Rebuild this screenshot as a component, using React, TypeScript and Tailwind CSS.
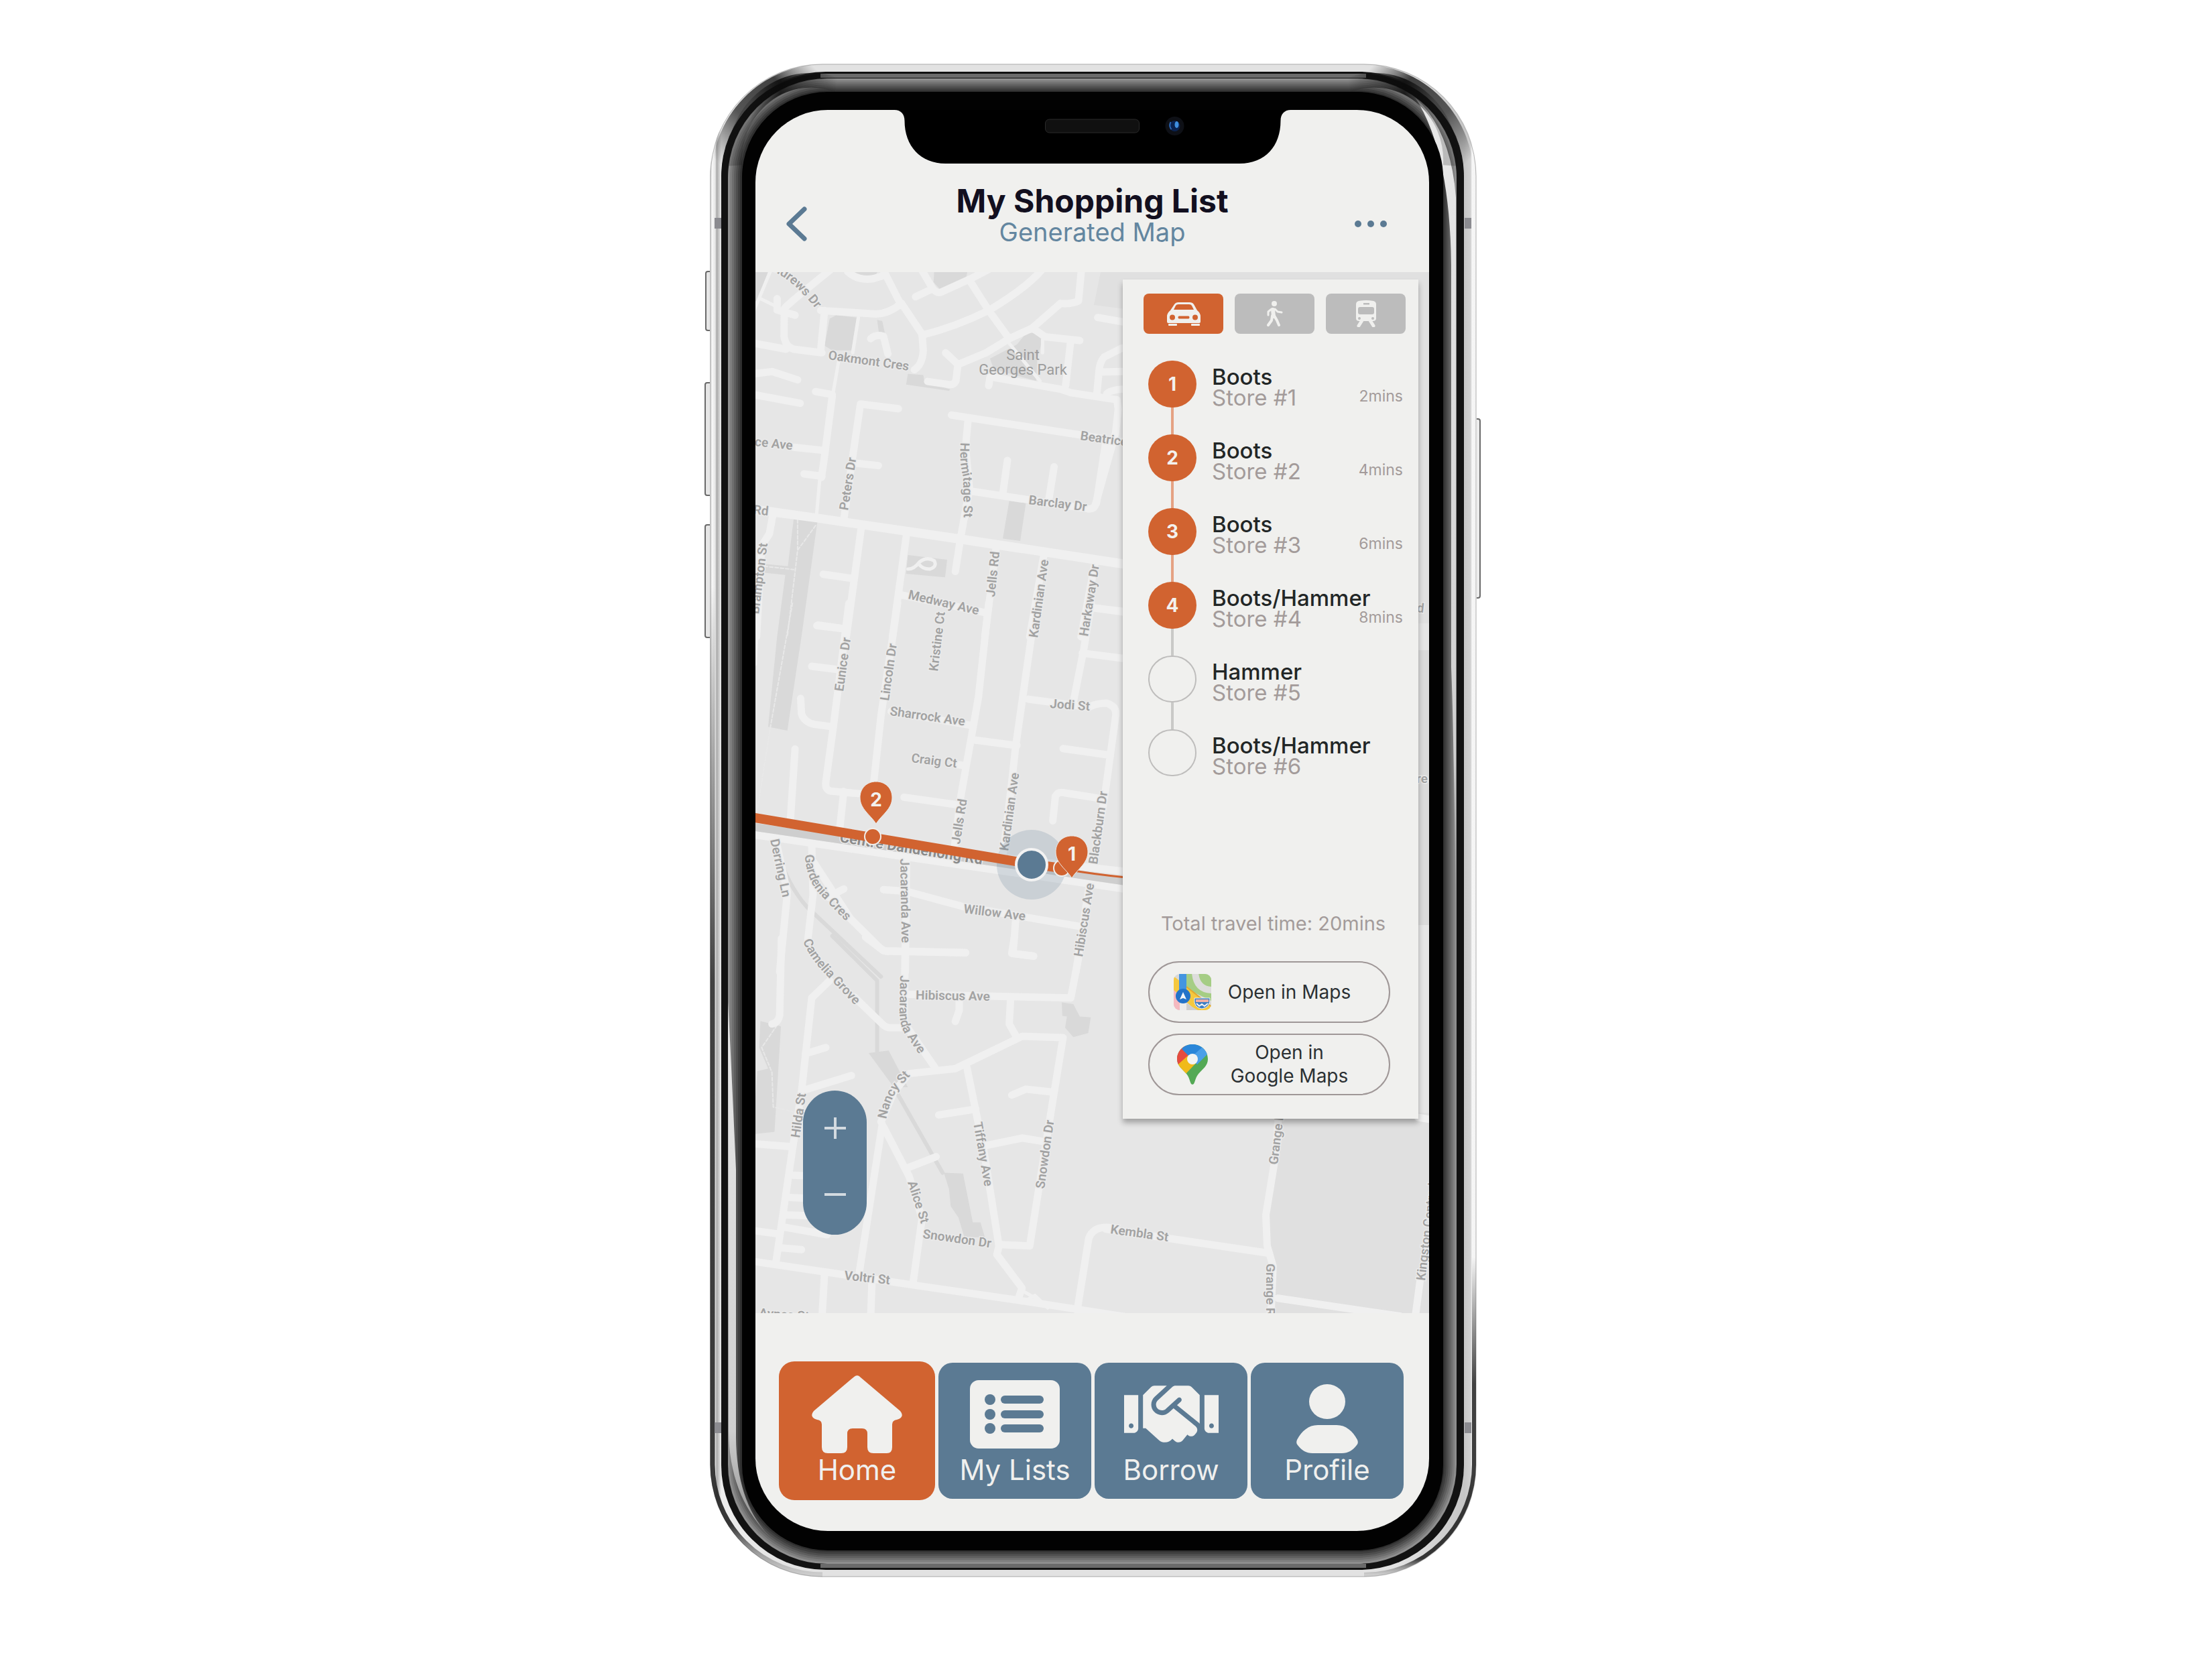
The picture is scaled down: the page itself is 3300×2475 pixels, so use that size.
import type { ReactNode } from "react";
import { FaHandshake } from "react-icons/fa";

/* ---------- map data ---------- */

type Tile = {
  transform: string;
  parks: string[];
  roads: string[];
  lanes: string[];
  trails: string[];
  creeks?: string[];
};

const tiles: Tile[] = [
  {
    transform: "translate(1100 400) scale(0.38265 0.35077)",
    parks: [
      "M360 215L385 200L465 210L445 350L370 350L340 330Z",
      "M545 220L565 225L575 275L552 275Z",
      "M665 450L725 455L730 485L830 515L825 522L658 495Z",
      "M1090 325L1120 285Q1145 270 1165 280L1190 305L1170 380L1165 480L1000 430L985 385Z",
      "M768 0L900 0L890 50L790 90L765 60Z",
      "M60 0L125 0L78 140L60 140Z",
      "M440 0L555 0L540 28Q500 38 455 22Z",
      "M220 1065L312 1080L250 1568L155 1568L187 1305L100 1295L105 1258L197 1268Z",
      "M1060 990L1125 1000L1103 1160L1035 1150Z",
      "M665 1220L818 1240L810 1315L658 1300Z",
    ],
    roads: [
      "M155 130L155 178L225 200M183 185L182 290Q188 335 220 345L330 360",
      "M60 318L190 345M185 170Q200 150 360 10",
      "M325 180L540 195Q590 195 640 150M340 180L325 350",
      "M640 160L570 10M640 150L720 280L725 350Q722 410 690 432",
      "M720 285Q850 250 980 180L910 60M980 180Q1120 90 1185 10M980 180L1060 300",
      "M430 15Q470 55 530 45L575 30",
      "M720 10L762 88Q780 110 795 102L910 45L980 5M760 88L695 122",
      "M520 300Q540 280 570 290L587 365",
      "M1342 0L1330 140Q1300 155 1260 150L1150 255L1060 300L970 360L860 410L852 480Q845 498 825 495L742 482M860 410L812 360",
      "M1150 255L1200 292L1335 308M1300 305L1280 500",
      "M1000 465L1260 515L1300 530L1480 560L1485 600L1475 700L1395 1010Q1385 1030 1360 1022L920 950M985 465L980 500",
      "M1500 340L1430 378Q1412 400 1410 440L1402 530M1415 442L1500 440M1440 535Q1450 520 1500 515",
      "M1405 210L1510 230",
      "M60 450L135 440L235 475M60 537L245 575M305 525L370 538",
      "M370 545L340 800L328 890M220 762L335 775M260 875L330 885",
      "M628 598L480 578L450 800L415 1070M450 828L550 840",
      "M835 625L1340 710L1510 740M900 640L890 760L905 940L870 1150L850 1290",
      "M1053 818L1035 960M1235 845L1215 980M1435 750L1400 1000",
      "M140 1040L125 1130L95 1180L75 1568",
      "M485 1090L425 1568M660 1130L605 1568M335 1302L450 1320M315 1518L425 1535",
      "M1010 1180L965 1568M1195 1220L1140 1568M1395 1250L1340 1568M1390 1445L1510 1460",
      "M640 1390L965 1465",
      "M50 1020L310 1060L880 1150L1510 1255",
      "M50 1028L310 1066L880 1158L1510 1263",
    ],
    lanes: [
      "M65 180L130 10M90 130L155 165",
      "M472 210L450 360",
      "M395 395L372 540",
      "M1190 305L1190 360M1060 320L1180 480",
      "M322 890L308 1060",
      "M665 1280Q690 1280 710 1250Q740 1225 768 1245Q780 1270 750 1280Q720 1280 708 1258",
    ],
    trails: ["M235 1070L235 1200L195 1568M305 1095L235 1200M105 1268L220 1282"],
  },
  {
    transform: "translate(1100 900) scale(0.38265 0.35077)",
    parks: ["M155 142L250 142L195 542L120 525Z"],
    roads: [
      "M435 0L375 520L345 760Q340 800 375 800L480 810M415 800L400 950",
      "M310 95L425 110M290 268L400 283M247 405L250 470Q260 505 300 515L370 525",
      "M625 0L560 480L530 780",
      "M225 620L207 920",
      "M980 0L940 400L870 830L845 1050M650 825L865 858M915 580L1090 605",
      "M1165 0L1085 610L1070 760L1035 1080",
      "M1380 0L1350 200L1310 420M1345 212L1510 235M1390 20L1510 38",
      "M1135 408L1370 442Q1400 425 1440 425Q1482 440 1475 480L1435 800L1390 1110",
      "M1270 618L1445 645M1230 925L1240 820Q1250 800 1275 806L1425 832",
      "M600 460L915 520M850 685L885 690",
      "M145 980L195 1230L165 1568M290 1020L295 1240L275 1430",
      "M285 1080L440 1340L555 1465Q575 1485 600 1480L890 1487M355 1250L415 1215",
      "M660 1060L655 1568M570 1218L660 1225L880 1290L1340 1375M1085 1350L1075 1490L1155 1500",
      "M1375 1180L1320 1568",
      "M50 982L1510 1215",
      "M1060 1085L1510 1140",
    ],
    lanes: ["M80 40L70 260"],
    trails: ["M215 0L130 520", "M130 520L75 900"],
    creeks: ["M150 1030Q190 1190 270 1290L560 1588"],
  },
  {
    transform: "translate(1100 1400) scale(0.38265 0.36990)",
    parks: [
      "M90 333L170 355L145 780L60 790L78 535L120 525L85 440Z",
      "M512 462L590 452L665 600L610 600Z",
      "M1265 258L1310 265L1335 315L1378 318L1368 382L1310 398L1278 360L1285 315L1267 312Z",
      "M805 945L880 948L918 1145L948 1145L965 1205L885 1205L862 1125L832 1080L825 1010Z",
    ],
    roads: [
      "M172 0L165 310Q160 340 135 345",
      "M360 170L290 240L250 620L215 850L150 1310M265 465L345 440M265 610L445 553",
      "M455 235L565 345Q580 362 600 360L650 360",
      "M655 0L650 340L770 520",
      "M500 -5L570 50L890 57M1080 -5L1070 60L1155 72",
      "M650 225L1300 240L1330 80M865 245L865 290L850 335M1065 250L1060 345L1090 400",
      "M560 740L610 620L670 545L850 525L1110 395L1270 400L1215 750L1140 1240L1020 1235",
      "M895 520L960 850L1020 1240L1012 1275L1110 1410L1095 1455",
      "M785 712L930 688M1070 632L1125 608L1230 620M970 835L1110 805L1200 820",
      "M565 750L475 1350M570 760L670 960L720 1130L685 1390M665 925L775 880",
      "M340 1350L330 1530M525 1380L520 1530",
      "M60 828L215 840M215 955L320 960M205 1045L320 1050M190 1115L320 1120M185 1165L350 1195M170 1248L250 1255M60 1178L160 1192",
      "M1325 1500L1370 1210Q1385 1165 1440 1165L1470 1168",
      "M60 1302L700 1400L1100 1460L1510 1525",
    ],
    lanes: ["M1110 1420L1210 1480M1110 1470L1160 1440L1210 1490"],
    trails: ["M155 350L95 440L135 540L140 680L220 700"],
    creeks: ["M370 -10L545 170L545 460", "M610 600L800 945"],
  },
  {
    transform: "translate(1660 1380) scale(0.35714 0.38265)",
    parks: [],
    roads: [
      "M-30 1185L655 1280M700 650L680 900L640 1130L645 1250L670 1330L660 1540",
      "M690 1455L1200 1525M1285 1380L1262 1540",
      "M1275 750L1340 760",
    ],
    lanes: [],
    trails: [],
  },
];

type LabelSpec = {
  x: number;
  y: number;
  angle: number;
  text: string;
  anchor?: "start" | "middle" | "end";
};

const labels: LabelSpec[] = [
  { x: 1235, y: 536, angle: 8, text: "Oakmont Cres" },
  { x: 1182, y: 671, angle: 6, text: "Beatrice Ave", anchor: "end" },
  { x: 1611, y: 656, angle: 8, text: "Beatrice Ave" },
  { x: 1265, y: 762, angle: -81, text: "Peters Dr" },
  { x: 1534, y: 752, angle: 7, text: "Barclay Dr" },
  { x: 1146, y: 769, angle: 6, text: "Centre Rd", anchor: "end" },
  { x: 1145, y: 811, angle: -83, text: "Brampton St", anchor: "end" },
  { x: 1354, y: 893, angle: 13, text: "Medway Ave" },
  { x: 1484, y: 891, angle: -84, text: "Jells Rd" },
  { x: 1548, y: 952, angle: -82, text: "Kardinian Ave" },
  { x: 1623, y: 950, angle: -81, text: "Harkaway Dr" },
  { x: 1399, y: 1002, angle: -83, text: "Kristine Ct" },
  { x: 1258, y: 1032, angle: -82, text: "Eunice Dr" },
  { x: 1326, y: 1046, angle: -82, text: "Lincoln Dr" },
  { x: 1327, y: 1067, angle: 8, text: "Sharrock Ave" },
  { x: 1359, y: 1137, angle: 7, text: "Craig Ct" },
  { x: 1566, y: 1056, angle: 4, text: "Jodi St" },
  { x: 1432, y: 1260, angle: -81, text: "Jells Rd" },
  { x: 1504, y: 1270, angle: -82, text: "Kardinian Ave" },
  { x: 1637, y: 1290, angle: -82, text: "Blackburn Dr" },
  { x: 1149, y: 1253, angle: 78, text: "Derring Ln" },
  { x: 1343, y: 1281, angle: 89, text: "Jacaranda Ave" },
  { x: 1437, y: 1362, angle: 7, text: "Willow Ave" },
  { x: 1615, y: 1428, angle: -81, text: "Hibiscus Ave" },
  { x: 1366, y: 1491, angle: 1, text: "Hibiscus Ave" },
  { x: 1193, y: 1698, angle: -82, text: "Hilda St" },
  { x: 1452, y: 1675, angle: 80, text: "Tiffany Ave" },
  { x: 1558, y: 1774, angle: -82, text: "Snowdon Dr" },
  { x: 1354, y: 1764, angle: 72, text: "Alice St" },
  { x: 1376, y: 1847, angle: 8, text: "Snowdon Dr" },
  { x: 1259, y: 1909, angle: 6, text: "Voltri St" },
  { x: 1132, y: 1965, angle: 4, text: "Aynes St" },
  { x: 1656, y: 1840, angle: 8, text: "Kembla St" },
  { x: 1906, y: 1738, angle: -83, text: "Grange Rd" },
  { x: 1889, y: 1885, angle: 90, text: "Grange Rd" },
  { x: 2126, y: 1911, angle: -83, text: "Kingston Centre Ln" },
  { x: 2124, y: 914, angle: 6, text: "Rd", anchor: "end" },
  { x: 2130, y: 1168, angle: 0, text: "re", anchor: "end" },
];

const curvedLabels = [
  { id: "andrews", d: "M1132 396Q1176 408 1217 461", text: "St Andrews Dr", end: true },
  { id: "hermitage", d: "M1433 660Q1431 690 1437 712L1438 790", text: "Hermitage St" },
  { id: "gardenia", d: "M1201 1275Q1202 1312 1224 1335L1275 1388", text: "Gardenia Cres" },
  { id: "camelia", d: "M1198 1404Q1208 1430 1234 1456L1290 1515", text: "Camelia Grove" },
  { id: "jacaranda", d: "M1343 1455L1342 1508Q1342 1530 1350 1542L1390 1600", text: "Jacaranda Ave" },
  { id: "nancy", d: "M1322 1670Q1328 1638 1342 1622L1368 1594", text: "Nancy St" },
];

function Pin({ x, y, label }: { x: number; y: number; label: string }) {
  return (
    <g transform={`translate(${x} ${y})`}>
      <path
        d="M0 63C-8 50 -24 41 -24 24C-24 10 -14 0 0 0C14 0 24 10 24 24C24 41 8 50 0 63Z"
        fill="#d16330"
        stroke="#ececea"
        strokeWidth="1"
      />
      <text
        x="0"
        y="37"
        textAnchor="middle"
        className="font-['Inter'] text-[28px] font-bold"
        fill="#f3f1ee"
      >
        {label}
      </text>
    </g>
  );
}

function StreetMap() {
  return (
    <svg
      className="absolute inset-0 h-full w-full"
      viewBox="1127 406 1005 1553"
      preserveAspectRatio="xMidYMid slice"
      role="img"
      aria-label="Route map"
    >
      <rect x="1127" y="406" width="1005" height="1553" fill="#e6e6e6" />
      <path d="M1642 406H2132V520L1632 455Z" fill="#e0e0e0" />
      <path d="M2110 406H2132V930H2110Z" fill="#e0e0e0" />
      <path d="M2110 970H2132V1380H2110Z" fill="#dadada" />
      <path d="M1906 1660H2132V1960H1899L1895 1866L1888 1820Z" fill="#e0e0e0" />
      {tiles.map((tile) => (
        <g key={tile.transform} transform={tile.transform} fill="none" strokeLinecap="round" strokeLinejoin="round">
          {tile.parks.map((d) => (
            <path key={d} d={d} fill="#d9d9d9" />
          ))}
          {tile.creeks?.map((d) => (
            <path key={d} d={d} stroke="#d9d9d9" strokeWidth="6" vectorEffect="non-scaling-stroke" />
          ))}
          {tile.trails.map((d) => (
            <path key={d} d={d} stroke="#e8e8e8" strokeWidth="2" strokeDasharray="5 3" vectorEffect="non-scaling-stroke" />
          ))}
          {tile.lanes.map((d) => (
            <path key={d} d={d} stroke="#f0f0f0" strokeWidth="5" vectorEffect="non-scaling-stroke" />
          ))}
          {tile.roads.map((d) => (
            <path key={d} d={d} stroke="#f0f0f0" strokeWidth="11" vectorEffect="non-scaling-stroke" />
          ))}
        </g>
      ))}

      <path d="M1120 1233L1680 1315" stroke="#cecece" strokeWidth="12" />

      <g
        className="font-['Roboto'] text-[19px] font-semibold"
        fill="#a2a2a2"
        stroke="#ebebeb"
        strokeWidth="3"
        paintOrder="stroke"
      >
        {labels.map((l) => (
          <text
            key={`${l.text}-${l.x}-${l.y}`}
            textAnchor={l.anchor ?? "start"}
            transform={`translate(${l.x} ${l.y}) rotate(${l.angle})`}
          >
            {l.text}
          </text>
        ))}
        {curvedLabels.map((l) => (
          <g key={l.id}>
            <path id={l.id} d={l.d} fill="none" stroke="none" />
            <text textAnchor={l.end ? "end" : "start"}>
              <textPath href={`#${l.id}`} startOffset={l.end ? "100%" : "0%"}>
                {l.text}
              </textPath>
            </text>
          </g>
        ))}
      </g>
      <g className="font-['Roboto'] text-[22px]" fill="#9c9c9c" textAnchor="middle">
        <text x="1526" y="537">Saint</text>
        <text x="1526" y="559">Georges Park</text>
      </g>
      <text
        transform="translate(1252 1256) rotate(9)"
        className="font-['Roboto'] text-[22px] font-bold"
        fill="#8b8b8b"
        stroke="#ebebeb"
        strokeWidth="3"
        paintOrder="stroke"
      >
        Centre Dandenong Rd
      </text>

      <circle cx="1539" cy="1290" r="52" fill="#5b7a93" fillOpacity="0.2" />
      <path d="M1120 1219L1539 1289L1590 1296" stroke="#d16330" strokeWidth="14" fill="none" />
      <path d="M1590 1297Q1630 1304 1680 1309" stroke="#d16330" strokeWidth="3" fill="none" />
      <circle cx="1302" cy="1248" r="12" fill="#d16330" stroke="#f0efec" strokeWidth="2" />
      <circle cx="1584" cy="1295" r="12" fill="#d16330" stroke="#f0efec" strokeWidth="2" />
      <circle cx="1539" cy="1290" r="23" fill="#5b7a93" stroke="#f2f2f2" strokeWidth="4" />
      <Pin x={1307} y={1166} label="2" />
      <Pin x={1599} y={1247} label="1" />
    </svg>
  );
}

/* ---------- icons ---------- */

function CarIcon() {
  return (
    <svg className="h-[35px] w-[50px]" viewBox="0 0 50 35" fill="#f0f0ee" aria-hidden="true">
      <path
        fillRule="evenodd"
        d="M5 12L11 3Q13 0 17 0H34Q38 0 40 3L45 12Q50 16 50 21V29Q50 31 48 31H2Q0 31 0 29V21Q0 16 5 12ZM10 11H40L37 5Q36 3 33 3H17Q14 3 13 5ZM8 18.5A4 4 0 1 0 8 26.5A4 4 0 1 0 8 18.5ZM42 18.5A4 4 0 1 0 42 26.5A4 4 0 1 0 42 18.5ZM18 20.5Q16.500 20.500 16.500 22.500Q16.500 24.500 18 24.500H32Q33.500 24.500 33.500 22.500Q33.500 20.500 32 20.500Z"
      />
      <rect x="2" y="32" width="13" height="3" rx="1" />
      <rect x="36" y="32" width="13" height="3" rx="1" />
    </svg>
  );
}

function WalkIcon() {
  return (
    <svg className="h-[39px] w-6" viewBox="0 0 24 39" fill="none" stroke="#f0f0ee" strokeLinecap="round" strokeLinejoin="round" aria-hidden="true">
      <circle cx="11" cy="4" r="4" fill="#f0f0ee" stroke="none" />
      <path d="M9 13L10 23" strokeWidth="6" />
      <path d="M7 12L2 16L2 21M12 12L16 16L22 17" strokeWidth="3" />
      <path d="M8 22L7 29L2 36M11 22L15 29L18 36" strokeWidth="4" />
    </svg>
  );
}

function TrainIcon() {
  return (
    <svg className="h-10 w-8" viewBox="0 0 32 40" aria-hidden="true">
      <path
        fillRule="evenodd"
        fill="#f0f0ee"
        d="M5 1Q16 -1 27 1Q31 2 31 6V27Q31 31 26 31H6Q1 31 1 27V6Q1 2 5 1ZM7 10Q4 10 4 13V18Q4 21 7 21H25Q28 21 28 18V13Q28 10 25 10ZM12 4V6.500H21V4ZM6 25A2 2 0 1 0 6 29A2 2 0 1 0 6 25ZM26 25A2 2 0 1 0 26 29A2 2 0 1 0 26 25Z"
      />
      <path d="M10 30L5 38M22 30L27 38" stroke="#f0f0ee" strokeWidth="5" strokeLinecap="round" />
    </svg>
  );
}

function AppleMapsIcon() {
  return (
    <svg className="h-[54px] w-14 shrink-0" viewBox="0 0 56 54" aria-hidden="true">
      <defs>
        <clipPath id="apple-tile">
          <rect width="56" height="54" rx="9" />
        </clipPath>
      </defs>
      <g clipPath="url(#apple-tile)">
        <rect width="56" height="54" fill="#d9d9d8" />
        <path d="M19 0H56V40L19 22Z" fill="#a5cd84" />
        <path d="M32 -2Q34 24 58 24" stroke="#dddddb" strokeWidth="10" fill="none" />
        <path d="M-2 2L19 18L58 50V60H40L19 42L-2 26Z" fill="#f5c83f" />
        <path d="M19 19L58 50" stroke="#e3a92f" strokeWidth="2" />
        <path d="M0 24L19 40V54H0Z" fill="#f4b9c0" />
        <path d="M19 44L36 54H19Z" fill="#cfcfce" />
        <rect x="9" y="36" width="10" height="18" fill="#ececec" />
        <rect x="8" y="0" width="11" height="32" fill="#4495e0" />
        <circle cx="14" cy="33" r="11" fill="#2373c9" />
        <path d="M14 27L19 38L14 36L9 38Z" fill="#f2f5f8" />
        <path d="M31 36H54Q55 50 42 52Q29 50 31 36Z" fill="#3d7fc4" stroke="#f2f2f2" strokeWidth="1" />
        <path d="M33 38H52V42H33Z" fill="#efb0a4" />
        <path d="M34 44L38 48L42 45L46 48L51 44" stroke="#f2f2f2" strokeWidth="2" fill="none" />
      </g>
    </svg>
  );
}

function GoogleMapsIcon() {
  return (
    <svg className="h-[60px] w-14 shrink-0" viewBox="-5 0 56 60" aria-hidden="true">
      <defs>
        <clipPath id="google-pin">
          <path d="M23 60C19 60 20 51 14 44C8 37 0 32 0 22C0 10 10 0 23 0C36 0 46 10 46 22C46 32 38 37 32 44C26 51 27 60 23 60Z" />
        </clipPath>
      </defs>
      <g clipPath="url(#google-pin)">
        <rect width="46" height="60" fill="#54a955" />
        <path d="M0 31L16 15L32 24L13 44L0 44Z" fill="#f0ba1a" />
        <path d="M-2 -2V33L24 10L8 -2Z" fill="#e54b40" />
        <path d="M7 7L16 -4H46V13L30 30L16 16Z" fill="#2a86d9" />
        <path d="M29 -2L48 -2V12L30 30L20 20L38 4Z" fill="#4b9fe8" />
        <circle cx="23" cy="22" r="8" fill="#f3f4f3" />
      </g>
    </svg>
  );
}

function HomeIcon() {
  return (
    <svg className="h-[116px] w-[135px]" viewBox="0 0 135 116" fill="#f0f0ee" aria-hidden="true">
      <path d="M62 3Q68 -3 73 3L132 53Q137 59 133 63Q131 65 127 66Q120 67 120 73V107Q120 116 112 116H92Q83 116 83 107V87Q83 79 75 79H61Q53 79 53 87V107Q53 116 44 116H24Q15 116 15 107V73Q15 67 8 66Q4 65 2 63Q-2 59 3 53Z" />
    </svg>
  );
}

function ListIcon() {
  return (
    <svg className="h-[102px] w-[134px]" viewBox="0 0 134 102" fill="#5b7a93" aria-hidden="true">
      <rect width="134" height="102" rx="13" fill="#f0f0ee" />
      {[29, 51, 72].map((y) => (
        <g key={y}>
          <circle cx="30" cy={y} r="8" />
          <rect x="46" y={y - 6} width="64" height="12" rx="6" />
        </g>
      ))}
    </svg>
  );
}

function ProfileIcon() {
  return (
    <svg className="h-[116px] w-[92px]" viewBox="0 0 92 116" fill="#f0f0ee" aria-hidden="true">
      <ellipse cx="46" cy="39" rx="27" ry="26" />
      <path d="M1 96C8 83 18 74 32 74H60C74 74 84 83 91 96Q93 101 90 104C84 112 77 116 68 116H24C15 116 8 112 2 104Q-1 101 1 96Z" />
    </svg>
  );
}

/* ---------- device shell ---------- */

function TopCorner() {
  return (
    <>
      <path d="M10 172A160 160 0 0 1 170 8" stroke="url(#corner-steel)" strokeWidth="14" />
      <path d="M37 152A114 120 0 0 1 190 32" stroke="url(#corner-band)" strokeWidth="22" />
    </>
  );
}

function DeviceShell() {
  return (
    <svg
      className="pointer-events-none absolute inset-0 h-full w-full overflow-visible"
      viewBox="0 0 1144 2258"
      preserveAspectRatio="none"
      aria-hidden="true"
      fill="none"
    >
      <defs>
        <linearGradient id="steel" x1="0" x2="1" y1="0" y2="0">
          <stop offset="0" stopColor="#c4c4c4" />
          <stop offset="0.003" stopColor="#f7f7f7" />
          <stop offset="0.007" stopColor="#e6e6e6" />
          <stop offset="0.009" stopColor="#a9a9a9" />
          <stop offset="0.015" stopColor="#eeeeee" />
          <stop offset="0.1" stopColor="#e2e2e2" />
          <stop offset="0.9" stopColor="#e2e2e2" />
          <stop offset="0.984" stopColor="#c6c6c6" />
          <stop offset="0.992" stopColor="#d0d0d0" />
          <stop offset="0.994" stopColor="#f7f7f7" />
          <stop offset="1" stopColor="#f2f2f2" />
        </linearGradient>
        <linearGradient id="edge-dark" x1="0" x2="0" y1="0" y2="1">
          <stop offset="0" stopColor="#222222" stopOpacity="0" />
          <stop offset="0.4" stopColor="#222222" stopOpacity="0.85" />
          <stop offset="0.95" stopColor="#222222" stopOpacity="0.9" />
          <stop offset="1" stopColor="#777777" stopOpacity="0.2" />
        </linearGradient>
        <linearGradient id="corner-steel" gradientUnits="userSpaceOnUse" x1="0" y1="150" x2="150" y2="0">
          <stop offset="0.05" stopColor="#3a3a3a" stopOpacity="0" />
          <stop offset="0.4" stopColor="#555555" />
          <stop offset="0.75" stopColor="#404040" />
          <stop offset="1" stopColor="#555555" stopOpacity="0" />
        </linearGradient>
        <linearGradient id="corner-band" gradientUnits="userSpaceOnUse" x1="60" y1="0" x2="190" y2="0">
          <stop offset="0" stopColor="#0a0a0a" stopOpacity="0.2" />
          <stop offset="0.35" stopColor="#0a0a0a" stopOpacity="0.85" />
          <stop offset="1" stopColor="#0a0a0a" stopOpacity="0" />
        </linearGradient>
        <linearGradient id="gloss" x1="0" x2="0" y1="0" y2="1">
          <stop offset="0" stopColor="#e8e8e8" />
          <stop offset="0.8" stopColor="#cfcfcf" />
          <stop offset="1" stopColor="#8a8a8a" />
        </linearGradient>
      </defs>

      {[
        { x: -6, y: 310, h: 88 },
        { x: -7, y: 476, h: 168 },
        { x: -7, y: 688, h: 168 },
      ].map((b) => (
        <rect key={b.y} x={b.x} y={b.y} width="12" height={b.h} rx="3" fill="#e6e6e6" stroke="#6a6a6a" strokeWidth="2" />
      ))}
      <rect x="1139" y="530" width="10" height="267" rx="3" fill="#ededed" stroke="#6a6a6a" strokeWidth="2" />

      <rect x="0" y="0" width="1144" height="2258" rx="168" fill="url(#steel)" />
      <rect x="1" y="1" width="1142" height="2256" rx="167" stroke="#b5b5b5" strokeWidth="1" />
      <path d="M4 780V2090A164 164 0 0 0 168 2254" stroke="url(#edge-dark)" strokeWidth="7" />
      <path d="M1140 1780V2090A164 164 0 0 1 976 2254" stroke="url(#edge-dark)" strokeWidth="6" />
      {[230, 2027].map((y) => (
        <g key={y}>
          <rect x="7" y={y} width="10" height="16" fill="#8b8b90" />
          <rect x="1126" y={y} width="10" height="16" fill="#8b8b90" />
        </g>
      ))}

      <rect x="17" y="12" width="1108" height="2235" rx="156" fill="#121212" />
      <path d="M165 18H979M165 2241H979" stroke="#6b6b6b" strokeWidth="6" />
      {["#8e8e8e", "#7e7e7e", "#6e6e6e", "#5e5e5e", "#4e4e4e", "#3e3e3e", "#2f2f2f"].map((color, i) => (
        <rect
          key={color}
          x={27 + i * 3}
          y={22 + i * 3}
          width={1087 - i * 6}
          height={2216 - i * 6}
          rx={148 - i * 3}
          fill={color}
        />
      ))}
      <path d="M27 1400Q30 1450 39 1650V2050Q40 2150 92 2200Q29 2140 28 2040Z" fill="url(#gloss)" />
      <path d="M1113 1280Q1110 1000 1106 900V300Q1104 130 1052 50Q1106 100 1113 200Z" fill="url(#gloss)" />
      <TopCorner />
      <g transform="translate(1142 0) scale(-1 1)">
        <TopCorner />
      </g>
      <rect x="48" y="42" width="1046" height="2176" rx="128" fill="#020202" />
    </svg>
  );
}

function Notch() {
  return (
    <svg className="absolute top-0 left-1/2 h-20 w-[591px] -translate-x-1/2" viewBox="207 0 591 80" aria-hidden="true">
      <path
        d="M207 -2V0C216 0 222 6 222 16C222 54 246 80 283 80H722C760 80 783 54 783 16C783 6 789 0 798 0V-2Z"
        fill="#000000"
      />
      <rect x="432" y="14" width="140" height="20" rx="6" fill="#101010" stroke="#2a2a2a" strokeWidth="1" />
      <circle cx="625" cy="24" r="14" fill="#0e1016" />
      <circle cx="625" cy="24" r="8" fill="#0a2250" />
      <ellipse cx="628" cy="22" rx="3" ry="5" fill="#3f8fe0" />
      <path d="M619 18Q616 24 620 29" stroke="#2a66b5" strokeWidth="2" fill="none" />
    </svg>
  );
}

/* ---------- panel and navigation ---------- */

type Stop = { item: string; store: string; time?: string };

const stops: Stop[] = [
  { item: "Boots", store: "Store #1", time: "2mins" },
  { item: "Boots", store: "Store #2", time: "4mins" },
  { item: "Boots", store: "Store #3", time: "6mins" },
  { item: "Boots/Hammer", store: "Store #4", time: "8mins" },
  { item: "Hammer", store: "Store #5" },
  { item: "Boots/Hammer", store: "Store #6" },
];

function StopRow({ stop, index }: { stop: Stop; index: number }) {
  const reached = stop.time !== undefined;
  const last = index === stops.length - 1;
  const nextReached = !last && stops[index + 1].time !== undefined;
  return (
    <li className={last ? "flex h-[70px] gap-[23px]" : "flex h-[110px] gap-[23px]"}>
      <div className="flex w-[72px] shrink-0 flex-col items-center">
        <span
          className={
            reached
              ? "flex h-[70px] w-[72px] items-center justify-center rounded-full bg-[#d16330] text-[28px] font-bold text-[#f3f1ee]"
              : "h-[70px] w-[72px] rounded-full border-2 border-[#bebdbc]"
          }
        >
          {reached ? index + 1 : null}
        </span>
        {!last && <span className={nextReached ? "w-1 flex-1 bg-[#e5a283]" : "w-1 flex-1 bg-[#c9c9c7]"} />}
      </div>
      <div className="min-w-0 flex-1 pt-[9px] text-[33px] leading-[31px] whitespace-nowrap">
        <p className="font-medium text-[#222626]">{stop.item}</p>
        <p className="text-[#a39b9a]">{stop.store}</p>
      </div>
      {stop.time && <span className="shrink-0 pt-[38px] text-[23px] leading-[31px] text-[#a39b9a]">{stop.time}</span>}
    </li>
  );
}

function ModeButton({ label, active, children }: { label: string; active?: boolean; children: ReactNode }) {
  return (
    <button
      type="button"
      aria-label={label}
      aria-pressed={active ?? false}
      className={
        active
          ? "flex h-[60px] items-center justify-center rounded-lg bg-[#d16330]"
          : "flex h-[60px] items-center justify-center rounded-lg bg-[#bcbcbc]"
      }
    >
      {children}
    </button>
  );
}

function RoutePanel() {
  return (
    <aside className="absolute top-[11px] right-4 flex w-[441px] flex-col bg-[#f0f0ee] pt-[21px] pr-[19px] pb-[35px] pl-[31px] shadow-[0_6px_8px_rgba(0,0,0,0.3)]">
      <div className="grid grid-cols-3 gap-[17px]">
        <ModeButton label="Drive" active>
          <CarIcon />
        </ModeButton>
        <ModeButton label="Walk">
          <WalkIcon />
        </ModeButton>
        <ModeButton label="Train">
          <TrainIcon />
        </ModeButton>
      </div>
      <ol className="mt-10 pr-1 pl-[7px]">
        {stops.map((stop, i) => (
          <StopRow key={stop.store} stop={stop} index={i} />
        ))}
      </ol>
      <p className="mt-[202px] pr-1 text-center text-[29px] leading-9 text-[#a39b9a]">Total travel time: 20mins</p>
      <div className="mt-[38px] flex flex-col gap-4 pr-[23px] pl-[7px]">
        <button
          type="button"
          className="flex h-[92px] items-center rounded-full border-2 border-[#9f9797] pr-8 pl-9 text-[28px] leading-[35px] text-[#2b3033]"
        >
          <AppleMapsIcon />
          <span className="flex-1 text-center">Open in Maps</span>
        </button>
        <button
          type="button"
          className="flex h-[92px] items-center rounded-full border-2 border-[#9f9797] pr-8 pl-9 text-[28px] leading-[35px] text-[#2b3033]"
        >
          <GoogleMapsIcon />
          <span className="flex-1 text-center">
            Open in
            <br />
            Google Maps
          </span>
        </button>
      </div>
    </aside>
  );
}

function ZoomControl() {
  return (
    <div className="absolute top-[1221px] left-[71px] flex h-[215px] w-[95px] flex-col rounded-full bg-[#5b7a93] pt-[6px] pb-[11px]">
      <button type="button" aria-label="Zoom in" className="flex flex-1 items-center justify-center">
        <svg className="size-8" viewBox="0 0 32 32" stroke="#d3dae0" strokeWidth="4" aria-hidden="true">
          <path d="M0 16H32M16 0V32" />
        </svg>
      </button>
      <button type="button" aria-label="Zoom out" className="flex flex-1 items-center justify-center">
        <svg className="size-8" viewBox="0 0 32 32" stroke="#d3dae0" strokeWidth="4" aria-hidden="true">
          <path d="M0 16H32" />
        </svg>
      </button>
    </div>
  );
}

function NavItem({ label, active, children }: { label: string; active?: boolean; children: ReactNode }) {
  return (
    <a
      href="#"
      aria-current={active ? "page" : undefined}
      className={
        active
          ? "flex h-[207px] flex-col items-center justify-end rounded-[23px] bg-[#d16330] pb-5"
          : "flex h-[203px] flex-col items-center justify-end rounded-[21px] bg-[#5b7a93] pb-[18px]"
      }
    >
      <span className="flex h-[117px] items-center">{children}</span>
      <span className="text-[42px] leading-[50px] whitespace-nowrap text-[#f0f0ee]">{label}</span>
    </a>
  );
}

export default function App() {
  return (
    <main className="flex min-h-screen justify-center bg-white pt-[95px] pr-[38px] font-['Inter',sans-serif]">
      <div className="relative h-fit w-full max-w-[1144px] pt-[69px] pr-[71px] pb-[69px] pl-[68px]">
        <DeviceShell />
        <div className="relative overflow-hidden rounded-[108px] bg-[#f0f0ee]">
          <Notch />
          <header className="grid h-[242px] grid-cols-[1fr_auto_1fr] items-center pt-[98px] pr-[44px] pl-[44px]">
            <button type="button" aria-label="Back" className="justify-self-start">
              <svg
                className="h-[54px] w-9"
                viewBox="0 0 36 54"
                fill="none"
                stroke="#5b7a93"
                strokeWidth="7"
                strokeLinecap="round"
                strokeLinejoin="round"
                aria-hidden="true"
              >
                <path d="M29 5L6 27L29 49" />
              </svg>
            </button>
            <div className="pb-6 text-center">
              <h1 className="text-5xl leading-[48px] font-bold text-[#120f1f]">My Shopping List</h1>
              <p className="text-[38px] leading-[44px] text-[#6386a0]">Generated Map</p>
            </div>
            <button type="button" aria-label="More options" className="mr-4 justify-self-end">
              <svg className="h-5 w-[54px]" viewBox="0 0 54 20" fill="#5b7a93" aria-hidden="true">
                <circle cx="8" cy="10" r="5" />
                <circle cx="27" cy="10" r="5" />
                <circle cx="46" cy="10" r="5" />
              </svg>
            </button>
          </header>
          <section className="relative h-[1553px] overflow-hidden" aria-label="Map">
            <StreetMap />
            <RoutePanel />
            <ZoomControl />
          </section>
          <nav className="grid grid-cols-[233fr_228fr_228fr_228fr] items-center gap-[5px] pt-[72px] pr-[38px] pb-[46px] pl-[35px]">
            <NavItem label="Home" active>
              <HomeIcon />
            </NavItem>
            <NavItem label="My Lists">
              <ListIcon />
            </NavItem>
            <NavItem label="Borrow">
              <FaHandshake className="h-[113px] w-[141px] text-[#f0f0ee]" aria-hidden="true" />
            </NavItem>
            <NavItem label="Profile">
              <ProfileIcon />
            </NavItem>
          </nav>
        </div>
      </div>
    </main>
  );
}
